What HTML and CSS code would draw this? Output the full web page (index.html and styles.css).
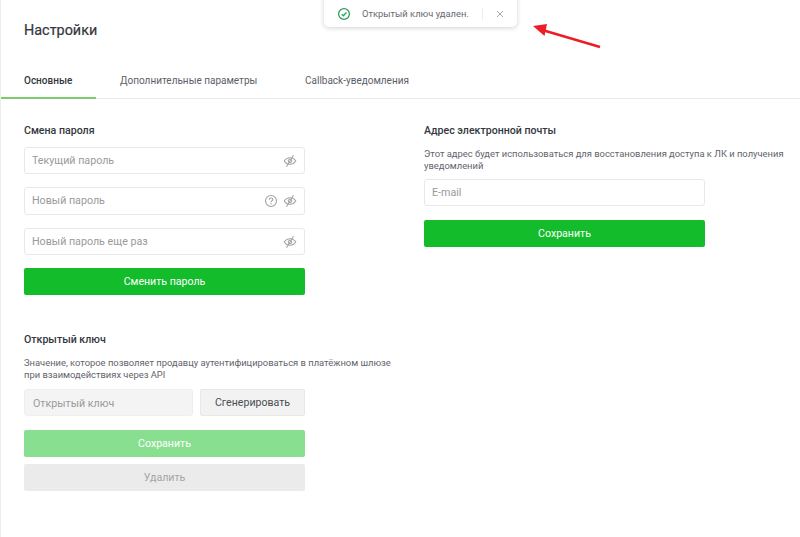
FILE: index.html
```html
<!DOCTYPE html>
<html lang="ru">
<head>
<meta charset="utf-8">
<title>Настройки</title>
<link rel="stylesheet" href="styles.css">
</head>
<body>
<div class="page">
  <h1 class="title">Настройки</h1>
  <nav class="tabs">
    <a class="tab active">Основные</a>
    <a class="tab">Дополнительные параметры</a>
    <a class="tab">Callback-уведомления</a>
  </nav>
  <main class="columns">
    <div class="col">
      <section class="group">
        <h2 class="heading">Смена пароля</h2>
        <div class="stack">
          <div class="field"><span class="ph">Текущий пароль</span><svg class="icon" viewBox="0 0 16 16"><use href="#eye"/></svg></div>
          <div class="field tall"><span class="ph">Новый пароль</span><svg class="icon" viewBox="0 0 16 16"><use href="#help"/></svg><svg class="icon" viewBox="0 0 16 16"><use href="#eye"/></svg></div>
          <div class="field"><span class="ph">Новый пароль еще раз</span><svg class="icon" viewBox="0 0 16 16"><use href="#eye"/></svg></div>
          <button class="btn primary">Сменить пароль</button>
        </div>
      </section>
      <section class="group second">
        <h2 class="heading">Открытый ключ</h2>
        <p class="desc">Значение, которое позволяет продавцу аутентифицироваться в платёжном шлюзе при взаимодействиях через API</p>
        <div class="keyrow">
          <div class="field disabled"><span class="ph">Открытый ключ</span></div>
          <button class="btn gen">Сгенерировать</button>
        </div>
        <button class="btn primary faded">Сохранить</button>
        <button class="btn muted">Удалить</button>
      </section>
    </div>
    <div class="col">
      <section class="group">
        <h2 class="heading">Адрес электронной почты</h2>
        <p class="desc wide">Этот адрес будет использоваться для восстановления доступа к ЛК и получения уведомлений</p>
        <div class="field"><span class="ph">E-mail</span></div>
        <button class="btn primary after">Сохранить</button>
      </section>
    </div>
  </main>
</div>
<div class="toast">
  <svg class="toast-ok" viewBox="0 0 14 14"><circle cx="7" cy="7" r="5.4" fill="none" stroke="#2aa05a" stroke-width="1.3"/><path d="M4.6 7.1l1.7 1.7 3.2-3.3" fill="none" stroke="#2aa05a" stroke-width="1.3"/></svg>
  <span class="toast-text">Открытый ключ удален.</span>
  <span class="toast-sep"></span>
  <svg class="toast-x" viewBox="0 0 8 8"><path d="M1 1l6 6M7 1L1 7" stroke="#a8a8a8" stroke-width="1" fill="none"/></svg>
</div>
<svg class="arrow" viewBox="0 0 72 26"><path d="M68 23L12 6.5" stroke="#ee1c25" stroke-width="2.400" fill="none"/><path d="M1 2l14 -2L12.500 12z" fill="#ee1c25"/></svg>
<svg class="defs" width="0" height="0">
  <symbol id="eye" viewBox="0 0 16 16"><path d="M2.200 8C3.600 5.800 5.600 4.700 8 4.700S12.400 5.800 13.800 8C12.400 10.200 10.400 11.300 8 11.300S3.600 10.200 2.200 8Z" fill="none" stroke="#a3a3a3" stroke-width="1.100"/><circle cx="8" cy="8" r="1.800" fill="none" stroke="#a3a3a3" stroke-width="1"/><path d="M11.500 2.300L4.500 13.700" stroke="#a3a3a3" stroke-width="1.100"/></symbol>
  <symbol id="help" viewBox="0 0 16 16"><circle cx="8" cy="8" r="5.500" fill="none" stroke="#a3a3a3" stroke-width="1.100"/><path d="M6.200 6.600C6.300 5.500 7 5 8 5s1.800.6 1.800 1.500c0 1.300-1.800 1.300-1.800 2.700" fill="none" stroke="#a3a3a3" stroke-width="1.100"/><circle cx="8" cy="10.800" r=".7" fill="#a3a3a3"/></symbol>
</svg>
</body>
</html>
```
FILE: styles.css
```css
* { box-sizing: border-box; }
html, body { margin: 0; padding: 0; }
body {
  width: 800px;
  height: 537px;
  overflow: hidden;
  background: #fff;
  font-family: Roboto, "Liberation Sans", sans-serif;
  color: #33373d;
  position: relative;
}
.page { border-left: 1px solid #ededed; height: 537px; }
.title { margin: 0; padding: 22px 0 0 23px; font-size: 14.400px; line-height: 18px; font-weight: 400; -webkit-text-stroke: .2px #33373d; }
.tabs { display: flex; margin-top: 31px; height: 28px; border-bottom: 1px solid #e9e9e9; }
.tab { height: 28px; padding: 0 0 0 23px; font-size: 10px; line-height: 20px; color: #5b6068; white-space: nowrap; }
.tab.active { width: 95px; color: #33373d; font-weight: 500; border-bottom: 2px solid #7fcb6e; }
.tab:nth-child(2) { width: 186px; padding-left: 24px; }
.columns { display: grid; grid-template-columns: 400px 376px; padding: 25px 0 0 23px; }
.col { width: 376px; }
.heading { margin: 0; font-size: 10.600px; line-height: 14px; font-weight: 500; color: #33373d; }
.stack { display: flex; flex-direction: column; gap: 13px; margin-top: 9px; width: 281px; }
.field {
  display: flex; align-items: center; gap: 3px;
  width: 281px; height: 27px;
  padding: 0 6px 0 7px;
  border: 1px solid #e8e8e8; border-radius: 3px;
  background: #fff;
  font-size: 10.700px;
}
.field.tall { height: 28px; padding-bottom: 1px; }
.ph { flex: 1; color: #9a9a9a; }
.icon { width: 16px; height: 16px; }
.btn {
  display: block; width: 281px; height: 27px;
  border: 0; border-radius: 2px; padding: 0;
  font: 400 10.600px Roboto, "Liberation Sans", sans-serif;
  color: #fff;
  text-align: center;
}
.primary { background: #13bc2b; }
.faded { background: #88df90; margin-top: 14px; }
.muted { background: #ebebeb; color: #a5a5a5; margin-top: 7px; }
.after { margin-top: 14px; }
.second { margin-top: 38px; }
.desc { margin: 10px 0 8px; font-size: 9.400px; line-height: 12px; color: #5f646b; width: 372px; }
.desc.wide { width: 376px; margin-bottom: 7px; }
.keyrow { display: flex; gap: 7px; width: 281px; }
.field.disabled { flex: none; width: 169px; background: #f4f4f4; border-color: #eeeeee; padding-left: 8px; padding-top: 1px; }
.gen { flex: none; width: 105px; background: #f2f2f2; border: 1px solid #e8e8e8; color: #4a4e54; }
.toast {
  position: absolute; left: 324px; top: -6px;
  width: 193px; height: 33px; padding: 6px 10px 0 13px;
  display: flex; align-items: center;
  background: #fff; border-radius: 5px;
  box-shadow: 0 1px 5px rgba(0,0,0,.18);
}
.toast-ok { width: 14px; height: 14px; }
.toast-text { margin-left: 11px; font-size: 9.400px; color: #666a70; white-space: nowrap; }
.toast-sep { width: 1px; height: 12px; background: #eeeeee; margin-left: 13px; }
.toast-x { width: 8px; height: 8px; margin-left: 13px; }
.arrow { position: absolute; left: 532px; top: 24px; width: 72px; height: 26px; }
.defs { position: absolute; }
```
